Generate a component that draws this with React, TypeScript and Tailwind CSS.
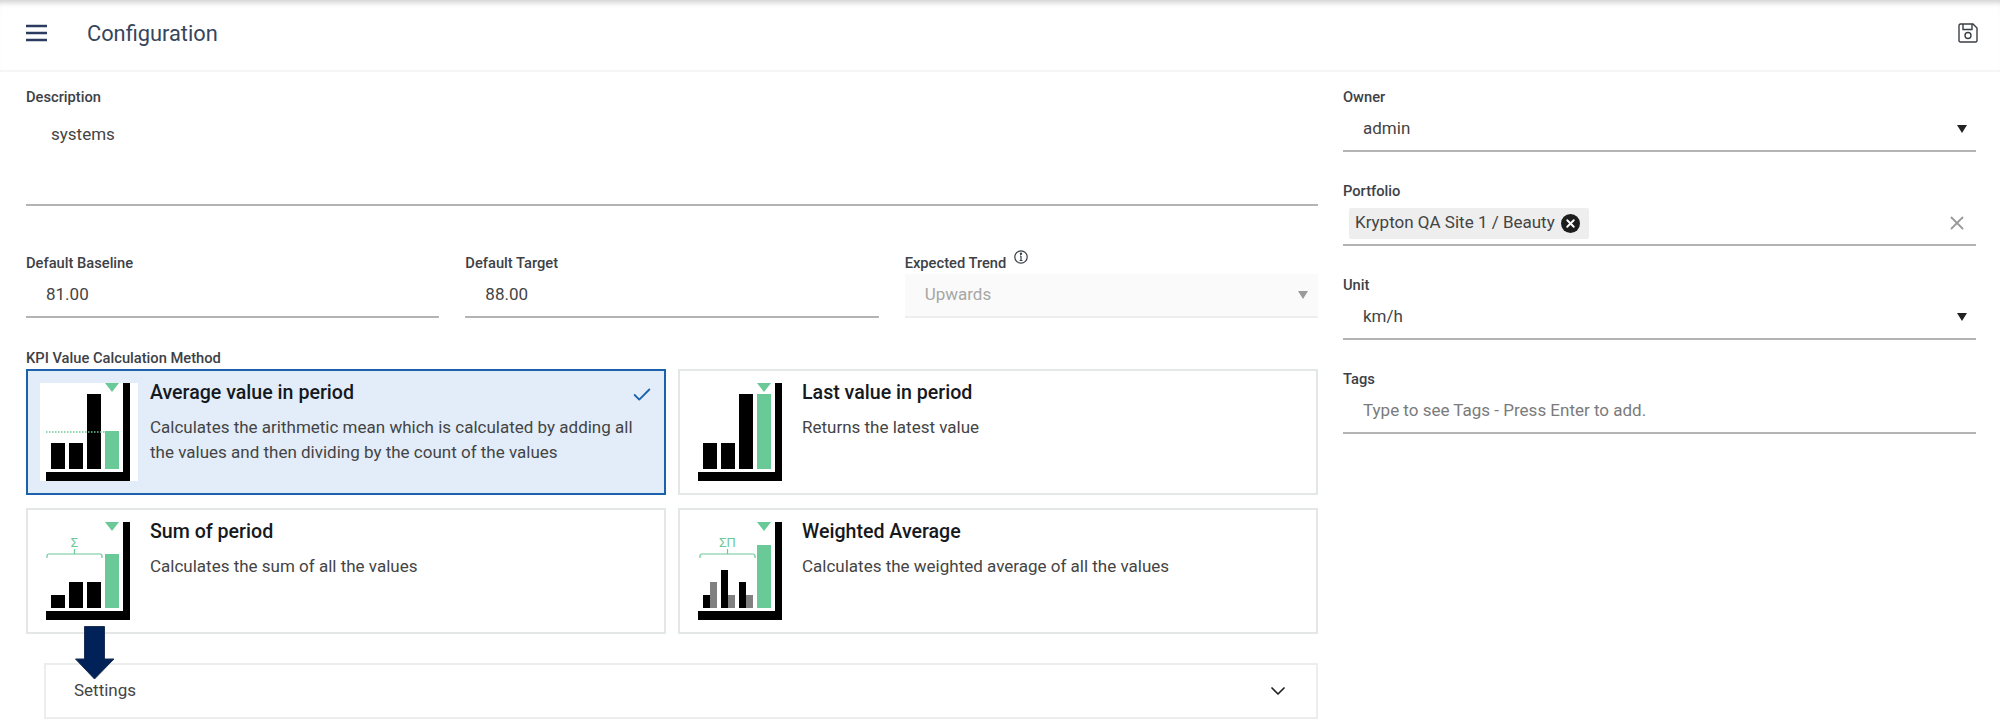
import { Check, ChevronDown, X } from "lucide-react";

const black = "#000000";
const green = "#69c997";
const gray = "#808080";

function ChartFrame({ children }: { children: React.ReactNode }) {
  return (
    <svg width="98" height="98" viewBox="0 0 98 98" className="shrink-0">
      {children}
      <polygon points="65,0 79,0 72,9" fill={green} />
      <rect x="83" y="0" width="7" height="98" fill={black} />
      <rect x="6" y="89" width="84" height="9" fill={black} />
    </svg>
  );
}

function Brace({ x1, x2, label }: { x1: number; x2: number; label: string }) {
  const mid = (x1 + x2) / 2;
  return (
    <g>
      <path
        d={`M${x1} 36 V34 Q${x1} 32 ${x1 + 2} 32 H${x2 - 2} Q${x2} 32 ${x2} 34 V36 M${mid} 32 V27`}
        fill="none"
        stroke={green}
        strokeWidth="1.2"
      />
      <text
        x={mid}
        y="25"
        textAnchor="middle"
        fontSize="13"
        fill={green}
        fontFamily="Roboto, sans-serif"
      >
        {label}
      </text>
    </g>
  );
}

function AverageChart() {
  return (
    <ChartFrame>
      <rect x="11" y="60" width="14" height="26" fill={black} />
      <rect x="29" y="60" width="14" height="26" fill={black} />
      <rect x="47" y="11" width="14" height="75" fill={black} />
      <rect x="65" y="48" width="14" height="38" fill={green} />
      <line x1="6" y1="49" x2="65" y2="49" stroke={green} strokeWidth="1.5" strokeDasharray="1.5 1.5" />
    </ChartFrame>
  );
}

function LastChart() {
  return (
    <ChartFrame>
      <rect x="11" y="60" width="14" height="26" fill={black} />
      <rect x="29" y="60" width="14" height="26" fill={black} />
      <rect x="47" y="11" width="14" height="75" fill={black} />
      <rect x="65" y="11" width="14" height="75" fill={green} />
    </ChartFrame>
  );
}

function SumChart() {
  return (
    <ChartFrame>
      <Brace x1={7} x2={62} label="Σ" />
      <rect x="11" y="73" width="14" height="13" fill={black} />
      <rect x="29" y="60" width="14" height="26" fill={black} />
      <rect x="47" y="60" width="14" height="26" fill={black} />
      <rect x="65" y="32" width="14" height="54" fill={green} />
    </ChartFrame>
  );
}

function WeightedChart() {
  return (
    <ChartFrame>
      <Brace x1={8} x2={63} label="ΣΠ" />
      <rect x="11" y="73" width="7" height="13" fill={black} />
      <rect x="18" y="60" width="7" height="26" fill={gray} />
      <rect x="29" y="48" width="7" height="38" fill={black} />
      <rect x="36" y="73" width="7" height="13" fill={gray} />
      <rect x="47" y="60" width="7" height="26" fill={black} />
      <rect x="54" y="73" width="7" height="13" fill={gray} />
      <rect x="65" y="23" width="14" height="63" fill={green} />
    </ChartFrame>
  );
}

function Caret({ muted }: { muted?: boolean }) {
  return (
    <svg width="10" height="8" viewBox="0 0 10 8" className="shrink-0">
      <polygon points="0,0 10,0 5,8" fill={muted ? "#9a9a9a" : "#222222"} />
    </svg>
  );
}

function Field({
  label,
  children,
  className = "",
}: {
  label: string;
  children: React.ReactNode;
  className?: string;
}) {
  return (
    <div className={className}>
      <div className="h-[18px] text-[14.7px] font-medium leading-[18px] text-[#3d4147]">{label}</div>
      {children}
    </div>
  );
}

function Value({ children }: { children: React.ReactNode }) {
  return (
    <div className="flex h-[46px] items-center justify-between border-b-2 border-[#b4b4b4] pl-[20px] pr-[9px] pt-[2px] text-[17px] text-[#444444]">
      {children}
    </div>
  );
}

function MethodCard({
  chart,
  title,
  lines,
  selected,
}: {
  chart: React.ReactNode;
  title: string;
  lines: string[];
  selected?: boolean;
}) {
  return (
    <div
      className={
        selected
          ? "relative flex h-[126px] gap-[12px] border-[2px] border-[#1b62ad] bg-[#e2edf9] pl-[12px] pt-[12px]"
          : "relative flex h-[126px] gap-[12px] border-[2px] border-[#e3e7e8] bg-white pl-[12px] pt-[12px]"
      }
    >
      <div className={selected ? "h-[98px] bg-white" : "h-[98px]"}>{chart}</div>
      <div className="-mt-[2px]">
        <div className="text-[19.6px] font-medium leading-[24px] text-[#16191d]">{title}</div>
        <div className="mt-[10px] text-[17px] leading-[25px] text-[#444444]">
          {lines.map((line) => (
            <div key={line}>{line}</div>
          ))}
        </div>
      </div>
      {selected && (
        <Check className="absolute right-[11px] top-[13px] h-[22px] w-[22px] text-[#1b62ad]" strokeWidth={2} />
      )}
    </div>
  );
}

export default function App() {
  return (
    <div className="relative h-[719px] w-[2000px] overflow-hidden bg-white font-['Roboto',sans-serif]">
      <header className="flex h-[72px] items-center justify-between border-b-2 border-[#f5f5f5] pb-[4px] pl-[26px] pr-[22px] shadow-[inset_0_7px_6px_-5px_rgba(0,0,0,0.22)]">
        <div className="flex items-center gap-[40px]">
          <svg width="21" height="18" viewBox="0 0 21 18">
            <path d="M0 2H21M0 9H21M0 16H21" stroke="#2c3c60" strokeWidth="2.4" />
          </svg>
          <h1 className="pt-[3px] text-[21.8px] font-normal text-[#36465c]">Configuration</h1>
        </div>
        <svg width="20" height="20" viewBox="0 0 20 20" fill="none" stroke="#3a3f45" strokeWidth="1.4">
          <path d="M2.5 1H15L19 5V17.5Q19 19 17.5 19H2.5Q1 19 1 17.5V2.5Q1 1 2.5 1Z" />
          <path d="M5 1V6.5H14V1" />
          <circle cx="10" cy="12.5" r="3" />
        </svg>
      </header>

      <main className="flex gap-[25px] pl-[26px] pt-[16px]">
        <div className="w-[1292px]">
          <Field label="Description">
            <div className="h-[100px] border-b-2 border-[#b4b4b4] pl-[25px] pt-[16px] text-[17px] leading-[24px] text-[#444444]">
              systems
            </div>
          </Field>

          <div className="mt-[48px] grid grid-cols-3 gap-x-[26px]">
            <Field label="Default Baseline">
              <Value>81.00</Value>
            </Field>
            <Field label="Default Target">
              <Value>88.00</Value>
            </Field>
            <Field label="Expected Trend">
              <div className="mt-[2px] flex h-[44px] items-center justify-between border-b-2 border-[#eeeeee] bg-[#fafafa] pl-[20px] pr-[10px] text-[17px] text-[#a6a6a6]">
                Upwards
                <Caret muted />
              </div>
            </Field>
          </div>

          <div className="mt-[31px] h-[18px] text-[14.7px] font-medium leading-[18px] text-[#3d4147]">
            KPI Value Calculation Method
          </div>
          <div className="mt-[2px] grid grid-cols-2 gap-x-[12px] gap-y-[13px]">
            <MethodCard
              selected
              chart={<AverageChart />}
              title="Average value in period"
              lines={[
                "Calculates the arithmetic mean which is calculated by adding all",
                "the values and then dividing by the count of the values",
              ]}
            />
            <MethodCard chart={<LastChart />} title="Last value in period" lines={["Returns the latest value"]} />
            <MethodCard chart={<SumChart />} title="Sum of period" lines={["Calculates the sum of all the values"]} />
            <MethodCard
              chart={<WeightedChart />}
              title="Weighted Average"
              lines={["Calculates the weighted average of all the values"]}
            />
          </div>

          <div className="ml-[18px] mt-[29px] flex h-[56px] items-center justify-between border-2 border-[#eceeee] pl-[28px] pr-[26px] text-[17px] text-[#444444]">
            Settings
            <ChevronDown className="h-[24px] w-[24px] text-[#222222]" strokeWidth={1.75} />
          </div>
        </div>

        <div className="flex w-[633px] flex-col gap-[30px]">
          <Field label="Owner">
            <Value>
              admin
              <Caret />
            </Value>
          </Field>
          <Field label="Portfolio">
            <div className="flex h-[46px] items-center justify-between border-b-2 border-[#b4b4b4] pt-[2px] pl-[6px] pr-[8px]">
              <div className="flex h-[31px] items-center gap-[6px] rounded-[2px] bg-[#eeeeee] pl-[6px] pr-[9px] text-[17px] text-[#444444]">
                Krypton QA Site 1 / Beauty
                <span className="flex h-[19px] w-[19px] items-center justify-center rounded-full bg-[#1d1d1d]">
                  <X className="h-[13px] w-[13px] text-white" strokeWidth={3.5} />
                </span>
              </div>
              <X className="h-[22px] w-[22px] text-[#9a9a9a]" strokeWidth={2} />
            </div>
          </Field>
          <Field label="Unit">
            <Value>
              km/h
              <Caret />
            </Value>
          </Field>
          <Field label="Tags">
            <Value>
              <span className="text-[#7b7b7b]">Type to see Tags - Press Enter to add.</span>
            </Value>
          </Field>
        </div>
      </main>

      <svg
        width="14"
        height="14"
        viewBox="0 0 14 14"
        fill="none"
        stroke="#3a3f45"
        strokeWidth="1.2"
        className="absolute left-[1014px] top-[250px]"
      >
        <circle cx="7" cy="7" r="6.2" />
        <path d="M7 6V10.5M5.6 10.5H8.4M6 6H7" />
        <circle cx="7" cy="3.8" r="0.6" fill="#3a3f45" />
      </svg>

      <svg
        width="40"
        height="54"
        viewBox="0 0 40 54"
        className="absolute left-[74.5px] top-[626px]"
      >
        <polygon points="9.5,0.5 29.5,0.5 29.5,33 39,33 19.5,53 0.5,33 9.5,33" fill="#012159" stroke="#1b2f4e" strokeWidth="1" />
      </svg>
    </div>
  );
}
